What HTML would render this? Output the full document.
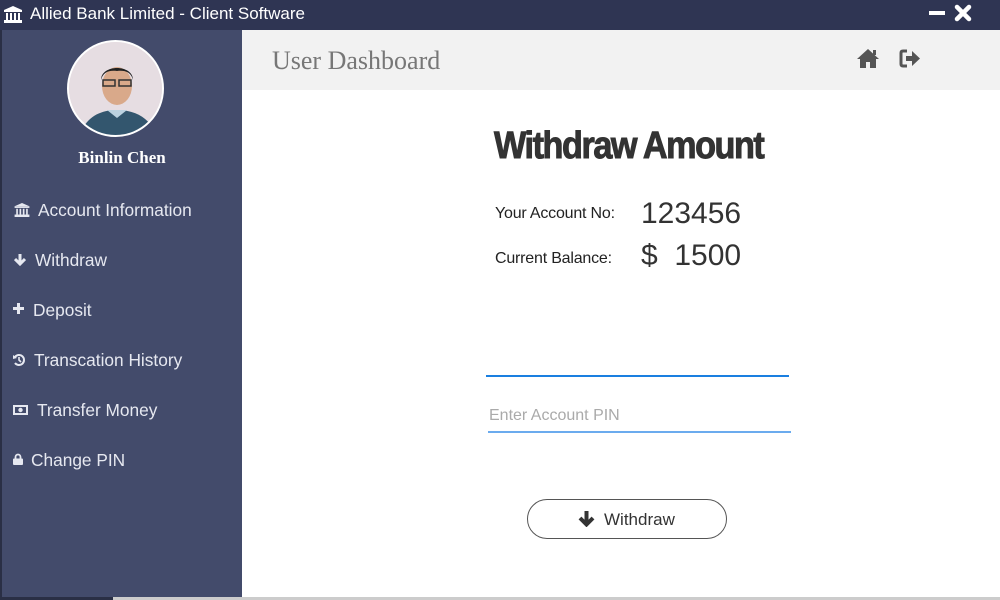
<!DOCTYPE html>
<html><head><meta charset="utf-8"><style>
*{margin:0;padding:0;box-sizing:border-box}
body{width:1000px;height:600px;overflow:hidden;background:#fff;font-family:"Liberation Sans",sans-serif;position:relative}
.tb{position:absolute;left:0;top:0;width:1000px;height:30px;background:#2f3553;color:#fff;font-size:17px}
.tb .t{position:absolute;left:30px;top:4px}
.side{position:absolute;left:2px;top:30px;width:240px;height:567px;background:#434b6b}
.edge{position:absolute;left:0;top:30px;width:2px;height:570px;background:#2a2f45}
.hdr{position:absolute;left:242px;top:30px;width:758px;height:60px;background:#f2f2f2}
.hdr .t{position:absolute;left:30px;top:15px;font-family:"Liberation Serif",serif;font-size:26px;color:#777}
.av{position:absolute;left:65px;top:10px;width:97px;height:97px;border-radius:50%;border:2px solid #fff;background:#e8e0e4;overflow:hidden}
.name{position:absolute;left:0;width:240px;top:118px;text-align:center;font-family:"Liberation Serif",serif;font-weight:bold;font-size:17px;color:#fff}
.mi{position:absolute;color:#e6e8f0;font-size:17.3px;margin-top:-1px}
.mi svg{position:absolute}
.bot{position:absolute;left:0;top:597px;width:1000px;height:3px;background:#ccc}
.bot:before{content:"";position:absolute;left:0;top:0;width:113px;height:3px;background:#2a2f45}
</style></head><body>
<div class="tb">
<svg style="position:absolute;left:4px;top:6px" width="18" height="17" viewBox="0 0 18 17" fill="#fff"><polygon points="9,0 18,4 0,4"/><rect x="0" y="4" width="18" height="2"/><rect x="2" y="7" width="2" height="7"/><rect x="6" y="7" width="2" height="7"/><rect x="10" y="7" width="2" height="7"/><rect x="14" y="7" width="2" height="7"/><rect x="0" y="14" width="18" height="3"/></svg>
<span class="t">Allied Bank Limited - Client Software</span>
<div style="position:absolute;left:929px;top:11px;width:16px;height:4px;background:#fff"></div>
<svg style="position:absolute;left:954px;top:4px" width="18" height="18" viewBox="0 0 18 18"><path d="M3 3L15 15M15 3L3 15" stroke="#fff" stroke-width="4.5" stroke-linecap="round"/></svg>
</div>
<div class="edge"></div>
<div class="side">
<div class="av"><svg width="97" height="97" viewBox="0 0 97 97"><rect width="97" height="97" fill="#e6dde2"/><path d="M10 97C14 78 28 68 48 68C68 68 84 78 88 97Z" fill="#33566e"/><path d="M38 68L48 76L58 68Z" fill="#bcd2e0"/><ellipse cx="48" cy="44" rx="15" ry="19" fill="#d9a98a"/><path d="M32 38C32 22 64 22 64 38C62 30 56 28 48 29C40 28 34 30 32 38Z" fill="#222"/><rect x="34" y="38" width="12" height="6" fill="none" stroke="#333" stroke-width="1.5"/><rect x="50" y="38" width="12" height="6" fill="none" stroke="#333" stroke-width="1.5"/></svg></div>
<div class="name">Binlin Chen</div>
<div class="mi" style="left:36px;top:171px"><svg style="left:-24px;top:3px" width="16" height="14" viewBox="0 0 18 17" fill="#e6e8f0"><polygon points="9,0 18,4 0,4"/><rect x="0" y="4" width="18" height="2"/><rect x="2" y="7" width="2" height="7"/><rect x="6" y="7" width="2" height="7"/><rect x="10" y="7" width="2" height="7"/><rect x="14" y="7" width="2" height="7"/><rect x="0" y="14" width="18" height="3"/></svg>Account Information</div>
<div class="mi" style="left:33px;top:221px"><svg style="left:-21px;top:3px" width="12" height="13" viewBox="0 0 12 13"><path d="M6 1V11M1 6L6 11L11 6" stroke="#e6e8f0" stroke-width="3" fill="none"/></svg>Withdraw</div>
<div class="mi" style="left:31px;top:271px"><svg style="left:-20px;top:3px" width="11" height="11" viewBox="0 0 11 11"><path d="M5.5 0V11M0 5.5H11" stroke="#e6e8f0" stroke-width="3"/></svg>Deposit</div>
<div class="mi" style="left:32px;top:321px"><svg style="left:-21px;top:4px" width="12" height="12" viewBox="0 0 12 12"><path d="M2 3A5 5 0 1 1 2 9" stroke="#e6e8f0" stroke-width="2" fill="none"/><path d="M6 3V6L8 8" stroke="#e6e8f0" stroke-width="1.6" fill="none"/><path d="M0 1L4 4L0 5Z" fill="#e6e8f0"/></svg>Transcation History</div>
<div class="mi" style="left:35px;top:371px"><svg style="left:-24px;top:5px" width="15" height="10" viewBox="0 0 15 10"><rect x="1" y="1" width="13" height="8" stroke="#e6e8f0" stroke-width="2" fill="none"/><circle cx="7.5" cy="5" r="2.2" fill="#e6e8f0"/></svg>Transfer Money</div>
<div class="mi" style="left:29px;top:421px"><svg style="left:-18px;top:3px" width="10" height="12" viewBox="0 0 10 12"><path d="M2.5 6V4A2.5 2.5 0 0 1 7.5 4V6" stroke="#e6e8f0" stroke-width="1.8" fill="none"/><rect x="0" y="5.5" width="10" height="6.5" rx="1" fill="#e6e8f0"/></svg>Change PIN</div>
</div>
<div class="hdr"><div class="t" style="top:16px">User Dashboard</div>
<svg style="position:absolute;left:615px;top:19px" width="22" height="19" viewBox="0 0 22 19" fill="#555"><path d="M11 0L0 10H3V19H9V13H13V19H19V10H22Z"/><rect x="16" y="1" width="3" height="5"/></svg>
<svg style="position:absolute;left:657px;top:19px" width="22" height="19" viewBox="0 0 22 19"><path d="M8 2H4Q2 2 2 4V15Q2 17 4 17H8" stroke="#555" stroke-width="3" fill="none"/><path d="M7 7H13V2L21 9.5L13 17V12H7Z" fill="#555"/></svg>
</div>
<div style="position:absolute;left:494px;top:125px;font-family:'Liberation Sans',sans-serif;font-weight:bold;font-size:38px;color:#333;letter-spacing:-1.6px;transform:scaleX(0.9);transform-origin:left;-webkit-text-stroke:1px #333">Withdraw Amount</div>
<div style="position:absolute;left:495px;top:205px;font-size:16px;color:#222;letter-spacing:-0.2px">Your Account No:</div>
<div style="position:absolute;left:641px;top:197px;font-size:30px;color:#333">123456</div>
<div style="position:absolute;left:495px;top:250px;font-size:16px;color:#222;letter-spacing:-0.2px">Current Balance:</div>
<div style="position:absolute;left:641px;top:239px;font-size:30px;color:#333">$&nbsp; 1500</div>
<div style="position:absolute;left:486px;top:375px;width:303px;height:2px;background:#1a7fe0"></div>
<div style="position:absolute;left:489px;top:407px;font-size:16px;color:#aaa">Enter Account PIN</div>
<div style="position:absolute;left:488px;top:431px;width:303px;height:2px;background:#3a8fe8;transform:scaleY(0.75)"></div>
<div style="position:absolute;left:527px;top:499px;width:200px;height:40px;border:1px solid #555;border-radius:20px"></div>
<svg style="position:absolute;left:578px;top:510px" width="17" height="17" viewBox="0 0 17 17"><path d="M8.5 1V14M2 8L8.5 14.5L15 8" stroke="#333" stroke-width="4" fill="none"/></svg>
<div style="position:absolute;left:604px;top:510px;font-size:17px;color:#333">Withdraw</div>
<div class="bot"></div>
</body></html>
